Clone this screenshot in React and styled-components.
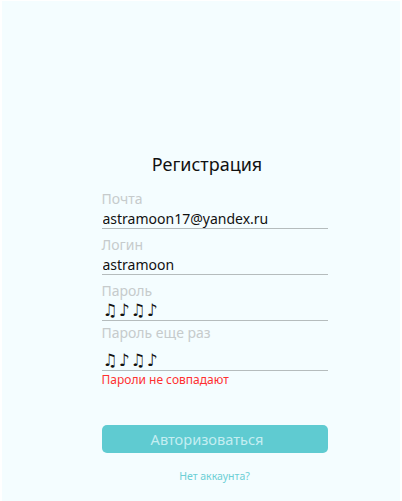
import React from 'react';
import styled, { createGlobalStyle } from 'styled-components';

const GlobalStyle = createGlobalStyle`
  html, body {
    margin: 0;
    padding: 0;
    background: #ffffff;
  }
  body {
    font-family: 'Noto Sans', 'Open Sans', sans-serif;
  }
`;

const Page = styled.div`
  min-height: 500px;
  margin: 1px 2px 0 2px;
  background: #f4fdff;
  display: flex;
  justify-content: center;
  padding: 149px 0 0 27px;
  box-sizing: border-box;
`;

const Form = styled.form`
  width: 226px;
  display: flex;
  flex-direction: column;
`;

const Title = styled.h1`
  margin: 0 15px 5px 0;
  text-align: center;
  font-size: 18px;
  font-weight: 400;
  color: #111;
  line-height: 28px;
`;

const Field = styled.label`
  display: flex;
  flex-direction: column;
`;

const Label = styled.span`
  font-size: 14px;
  line-height: 20px;
  color: #c6cbcc;
  padding-top: ${(p) => (p.$tall ? '2px' : '6px')};
  padding-bottom: ${(p) => (p.$tall ? '8px' : '0')};
`;

const Input = styled.input`
  border: none;
  border-bottom: 1px solid #b5bcbd;
  background: transparent;
  padding: 0 1px 1px;
  margin: 0;
  height: 20px;
  box-sizing: border-box;
  font-family: ${(p) => (p.$secret ? "'DejaVu Sans', sans-serif" : 'inherit')};
  font-size: ${(p) => (p.$secret ? '17px' : '14px')};
  letter-spacing: ${(p) => (p.$secret ? '1px' : '0')};
  color: #111;
  outline: none;
`;

const Error = styled.div`
  font-size: 12px;
  line-height: 18px;
  color: #ff3030;
`;

const Submit = styled.button`
  margin-top: 36px;
  height: 28px;
  padding: 0 15px 0 0;
  border: none;
  border-radius: 5px;
  background: #5fcbd1;
  color: #c4eef1;
  font-family: inherit;
  font-size: 14.6px;
  cursor: pointer;
`;

const SignUpLink = styled.a`
  margin-top: 16px;
  text-align: center;
  font-size: 10.5px;
  line-height: 14px;
  color: #6ccfd5;
  text-decoration: none;
`;

const fields = [
  { label: 'Почта', value: 'astramoon17@yandex.ru' },
  { label: 'Логин', value: 'astramoon' },
  { label: 'Пароль', value: '♫♪♫♪', secret: true },
  { label: 'Пароль еще раз', value: '♫♪♫♪', secret: true, tall: true },
];

const App = () => {
  return (
    <>
      <GlobalStyle />
      <Page>
        <Form onSubmit={(e) => e.preventDefault()}>
          <Title>Регистрация</Title>
          {fields.map((f) => (
            <Field key={f.label}>
              <Label $tall={f.tall}>{f.label}</Label>
              <Input $secret={f.secret} defaultValue={f.value} readOnly />
            </Field>
          ))}
          <Error>Пароли не совпадают</Error>
          <Submit type="submit">Авторизоваться</Submit>
          <SignUpLink href="#">Нет аккаунта?</SignUpLink>
        </Form>
      </Page>
    </>
  );
};

export default App;
